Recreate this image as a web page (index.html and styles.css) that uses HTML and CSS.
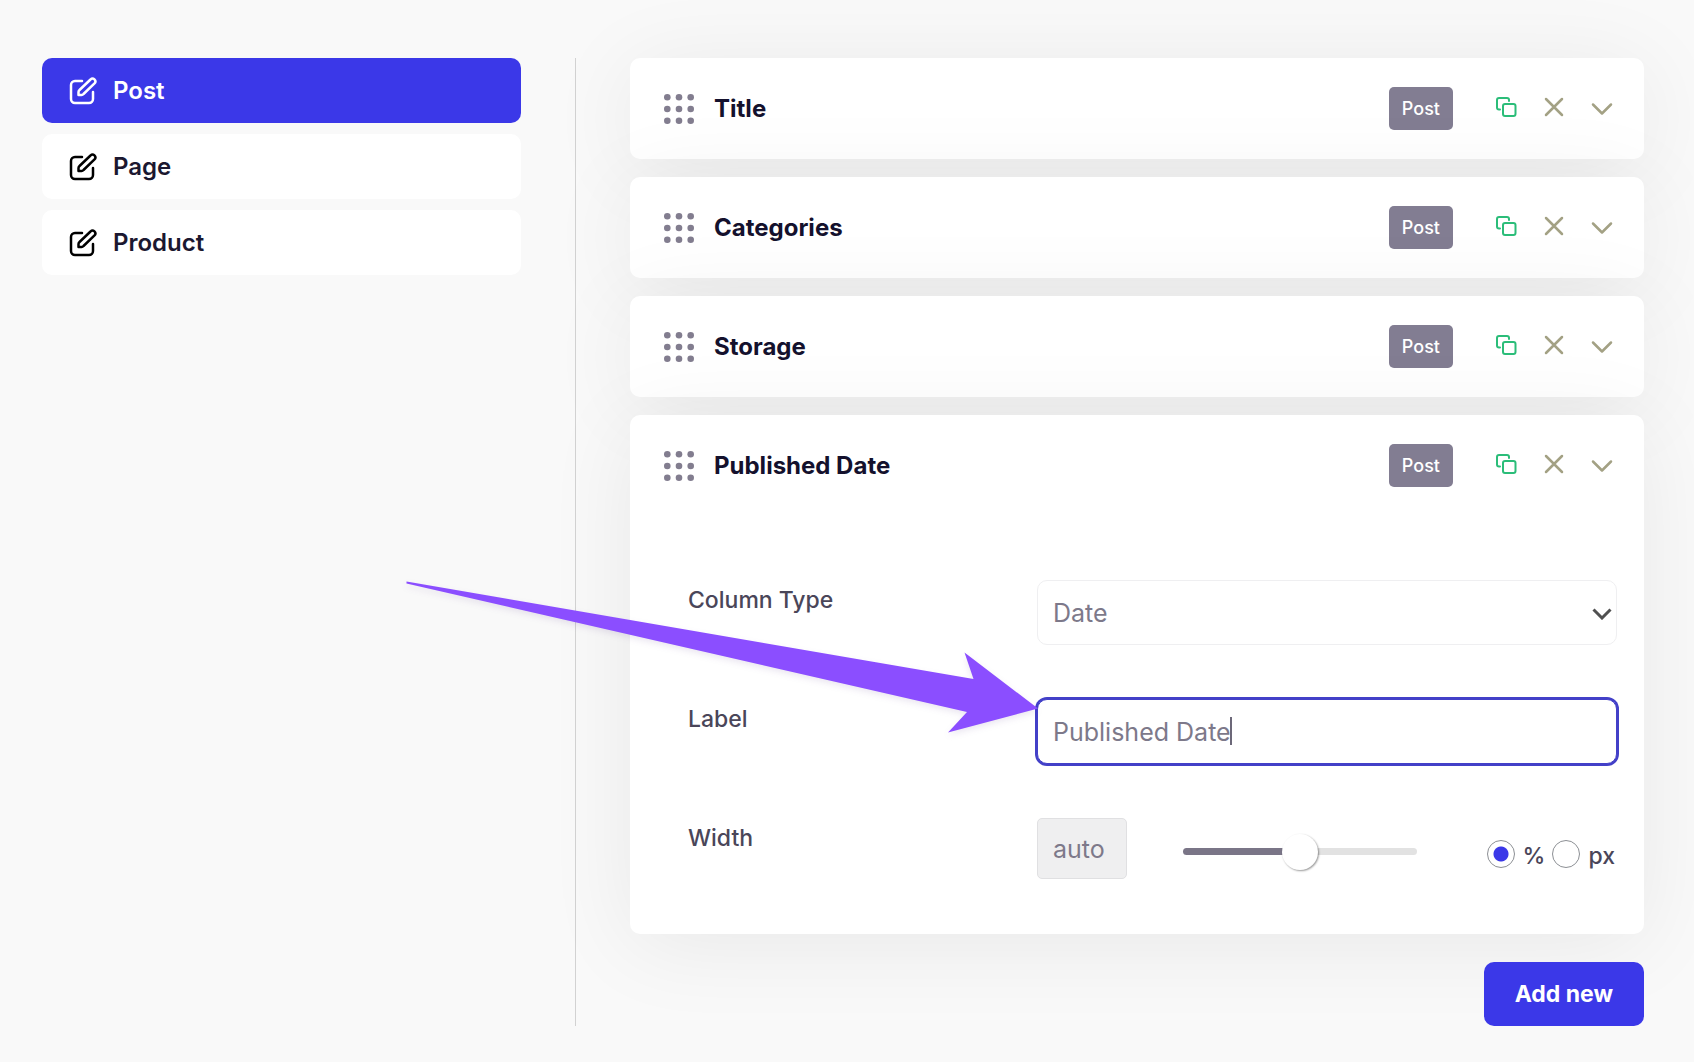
FILE: index.html
```html
<!DOCTYPE html>
<html lang="en">
<head>
    <meta charset="UTF-8">
    <meta name="viewport" content="width=device-width, initial-scale=1">
    <title>Columns</title>
    <link rel="stylesheet" href="styles.css">
</head>

<body>
    <svg class="sprite" aria-hidden="true">
        <symbol id="edit" viewBox="0 0 28 28">
            <path d="M13 4H6a4 4 0 0 0-4 4v14a4 4 0 0 0 4 4h14a4 4 0 0 0 4-4v-7" />
            <path d="M21.500 2.500a2.700 2.700 0 0 1 4 3.900L14.500 17a3 3 0 0 1-2 1H9.500v-3a3 3 0 0 1 1-2z" />
        </symbol>
        <symbol id="grip" viewBox="0 0 30 30">
            <circle cx="3.300" cy="3.300" r="3.300" /><circle cx="15" cy="3.300" r="3.300" /><circle cx="26.700" cy="3.300" r="3.300" />
            <circle cx="3.300" cy="15" r="3.300" /><circle cx="15" cy="15" r="3.300" /><circle cx="26.700" cy="15" r="3.300" />
            <circle cx="3.300" cy="26.700" r="3.300" /><circle cx="15" cy="26.700" r="3.300" /><circle cx="26.700" cy="26.700" r="3.300" />
        </symbol>
        <symbol id="copy" viewBox="0 0 24 24">
            <path d="M6 14.500H5a2 2 0 0 1-2-2V5a2 2 0 0 1 2-2h8a2 2 0 0 1 2 2v1" />
            <rect x="9" y="9" width="12.500" height="12" rx="2" />
        </symbol>
        <symbol id="close" viewBox="0 0 24 24">
            <path d="M4 4l16 16M20 4L4 20" />
        </symbol>
        <symbol id="chevron" viewBox="0 0 24 24">
            <path d="M3 9.500l9 9 9-9" />
        </symbol>
    </svg>

    <div class="layout">
        <nav class="sidebar">
            <a href="#post" class="tab active"><svg class="edit-icon"><use href="#edit" /></svg>Post</a>
            <a href="#page" class="tab"><svg class="edit-icon"><use href="#edit" /></svg>Page</a>
            <a href="#product" class="tab"><svg class="edit-icon"><use href="#edit" /></svg>Product</a>
        </nav>

        <main class="content">
            <section class="card">
                <header class="card-header">
                    <svg class="grip"><use href="#grip" /></svg>
                    <h2>Title</h2>
                    <span class="badge">Post</span>
                    <div class="actions">
                        <button type="button" class="copy" aria-label="Duplicate"><svg><use href="#copy" /></svg></button>
                        <button type="button" aria-label="Remove"><svg><use href="#close" /></svg></button>
                        <button type="button" aria-label="Expand"><svg><use href="#chevron" /></svg></button>
                    </div>
                </header>
            </section>

            <section class="card">
                <header class="card-header">
                    <svg class="grip"><use href="#grip" /></svg>
                    <h2>Categories</h2>
                    <span class="badge">Post</span>
                    <div class="actions">
                        <button type="button" class="copy" aria-label="Duplicate"><svg><use href="#copy" /></svg></button>
                        <button type="button" aria-label="Remove"><svg><use href="#close" /></svg></button>
                        <button type="button" aria-label="Expand"><svg><use href="#chevron" /></svg></button>
                    </div>
                </header>
            </section>

            <section class="card">
                <header class="card-header">
                    <svg class="grip"><use href="#grip" /></svg>
                    <h2>Storage</h2>
                    <span class="badge">Post</span>
                    <div class="actions">
                        <button type="button" class="copy" aria-label="Duplicate"><svg><use href="#copy" /></svg></button>
                        <button type="button" aria-label="Remove"><svg><use href="#close" /></svg></button>
                        <button type="button" aria-label="Expand"><svg><use href="#chevron" /></svg></button>
                    </div>
                </header>
            </section>

            <section class="card">
                <header class="card-header">
                    <svg class="grip"><use href="#grip" /></svg>
                    <h2>Published Date</h2>
                    <span class="badge">Post</span>
                    <div class="actions">
                        <button type="button" class="copy" aria-label="Duplicate"><svg><use href="#copy" /></svg></button>
                        <button type="button" aria-label="Remove"><svg><use href="#close" /></svg></button>
                        <button type="button" aria-label="Collapse"><svg><use href="#chevron" /></svg></button>
                    </div>
                </header>

                <form class="settings">
                    <div class="row">
                        <label for="type">Column Type</label>
                        <div class="field">
                            <select id="type">
                                <option>Date</option>
                            </select>
                            <svg class="select-arrow" viewBox="0 0 20 12"><path d="M1.500 1.500l8.500 8.500 8.500-8.500" /></svg>
                        </div>
                    </div>

                    <div class="row">
                        <label for="label">Label</label>
                        <div class="field">
                            <input type="text" id="label" class="focused" value="Published Date">
                            <span class="caret"></span>
                            <svg class="pointer" viewBox="0 0 636 160">
                                <path d="M2.500 4.500L569.500 102l-9-26.500L634 131.500 544 155.500l19-20.500L2.500 6.500z" />
                            </svg>
                        </div>
                    </div>

                    <div class="row">
                        <label for="width">Width</label>
                        <div class="field width-field">
                            <input type="text" id="width" value="auto" readonly>
                            <input type="range" aria-label="Width value" min="0" max="100" value="50" style="--fill: 50%">
                            <div class="units">
                                <input type="radio" name="unit" id="percent" checked>
                                <label for="percent">%</label>
                                <input type="radio" name="unit" id="px">
                                <label for="px">px</label>
                            </div>
                        </div>
                    </div>
                </form>
            </section>

            <button type="button" class="add">Add new</button>
        </main>
    </div>
</body>
</html>
```
FILE: styles.css
```css
* {
    box-sizing: border-box;
}

body {
    margin: 0;
    padding: 58px 50px 36px 42px;
    background: #f9f9f9;
    color: #14112d;
    font-family: Inter, sans-serif;
    font-size: 24px;
}

button,
input,
select {
    margin: 0;
    font-family: inherit;
    font-size: inherit;
}

svg {
    display: block;
    fill: none;
    stroke: currentColor;
    stroke-linecap: round;
    stroke-linejoin: round;
}

.sprite {
    position: absolute;
    width: 0;
    height: 0;
}

.layout {
    display: grid;
    grid-template-columns: 1fr 2fr;
}

.sidebar {
    display: flex;
    flex-direction: column;
    gap: 11px;
    padding-right: 54px;
    border-right: 1px solid #d2d2d2;
}

.tab {
    display: flex;
    align-items: center;
    gap: 16px;
    height: 65px;
    padding: 0 27px;
    border-radius: 10px;
    background: #fff;
    color: #1b1830;
    font-weight: 600;
    text-decoration: none;
}

.tab.active {
    background: #3b38e8;
    color: #fff;
}

.edit-icon {
    width: 28px;
    height: 28px;
    color: #000;
    stroke-width: 2.500;
}

.active .edit-icon {
    color: #fff;
}

.content {
    display: flex;
    flex-direction: column;
    gap: 18px;
    min-width: 0;
    padding-left: 54px;
}

.card {
    border-radius: 10px;
    background: #fff;
    box-shadow: 0 10px 90px rgba(0, 0, 0, 0.07);
}

.card-header {
    display: flex;
    align-items: center;
    height: 101px;
    padding: 0 30px 0 34px;
}

.grip {
    width: 30px;
    height: 30px;
    margin-right: 20px;
    fill: #827d8f;
    stroke: none;
}

h2 {
    flex: 1;
    margin: 0;
    font-size: 24px;
    font-weight: 700;
}

.badge {
    padding: 0 13px;
    border-radius: 5px;
    background: #827d92;
    color: #fff;
    font-size: 18px;
    font-weight: 500;
    line-height: 43px;
}

.actions {
    display: flex;
    gap: 24px;
    margin-left: 41px;
    padding-bottom: 4px;
}

.actions button {
    padding: 0;
    border: none;
    background: none;
    color: #a3a184;
    cursor: pointer;
}

.actions .copy {
    color: #2bbd79;
}

.actions svg {
    width: 24px;
    height: 24px;
    stroke-width: 2.500;
}

.actions .copy svg {
    stroke-width: 2;
}

.settings {
    display: flex;
    flex-direction: column;
    gap: 54px;
    padding: 64px 27px 55px 58px;
}

.row {
    display: grid;
    grid-template-columns: 349px 1fr;
    align-items: start;
}

label {
    color: #4a4659;
    font-size: 23px;
    font-weight: 500;
    line-height: 40px;
}

.field {
    position: relative;
}

select,
input[type="text"] {
    display: block;
    width: 100%;
    height: 65px;
    padding: 0 15px;
    border: 1px solid #efeff1;
    border-radius: 10px;
    outline: none;
    background: #fff;
    color: #7d798a;
    font-size: 25px;
}

select {
    appearance: none;
}

.select-arrow {
    position: absolute;
    top: 28px;
    right: 5px;
    width: 20px;
    height: 12px;
    color: #505050;
    stroke-width: 3;
    stroke-linecap: butt;
    stroke-linejoin: miter;
    pointer-events: none;
}

input.focused {
    border-color: #4340c8;
    box-shadow: 0 0 0 2px #4340c8;
}

.caret {
    position: absolute;
    top: 18px;
    left: 193px;
    width: 2px;
    height: 28px;
    background: #6c6879;
}

/* arrow that points at the label field */
.pointer {
    position: absolute;
    top: -122px;
    right: calc(100% - 3px);
    width: 636px;
    height: 160px;
    fill: #8b4eff;
    stroke: none;
    filter: drop-shadow(0 3px 3px rgba(60, 20, 120, 0.1));
    pointer-events: none;
}

.width-field {
    display: flex;
    align-items: flex-start;
}

.width-field input[type="text"] {
    width: 90px;
    height: 61px;
    border-color: #e0e0e2;
    border-radius: 5px;
    background: #efeff0;
}

input[type="range"] {
    flex: 1;
    min-width: 0;
    height: 36px;
    margin: 15px 70px 0 56px;
    appearance: none;
    background: none;
}

input[type="range"]::-webkit-slider-runnable-track {
    height: 7px;
    border-radius: 4px;
    background: linear-gradient(to right, #7a7587 var(--fill), #e2e2e2 var(--fill));
}

input[type="range"]::-webkit-slider-thumb {
    width: 36px;
    height: 36px;
    margin-top: -14px;
    appearance: none;
    border-radius: 50%;
    background: #fff;
    box-shadow: 1px 1px 2px rgba(0, 0, 0, 0.4);
}

.units {
    display: flex;
    align-items: center;
    margin-top: 18px;
    padding-right: 2px;
}

.units label {
    margin: 0 7px 0 8px;
}

.units label:last-child {
    margin-right: 0;
}

input[type="radio"] {
    width: 28px;
    height: 28px;
    margin-bottom: 4px;
    appearance: none;
    border: 1px solid #8c8f94;
    border-radius: 50%;
    background: #fff;
}

input[type="radio"]:checked {
    background: radial-gradient(circle, #3b38e8 7px, #fff 8px);
}

.add {
    align-self: flex-end;
    height: 64px;
    margin-top: 10px;
    padding: 0 31px;
    border: none;
    border-radius: 10px;
    background: #3b38e8;
    color: #fff;
    font-size: 23px;
    font-weight: 700;
    cursor: pointer;
}
```
